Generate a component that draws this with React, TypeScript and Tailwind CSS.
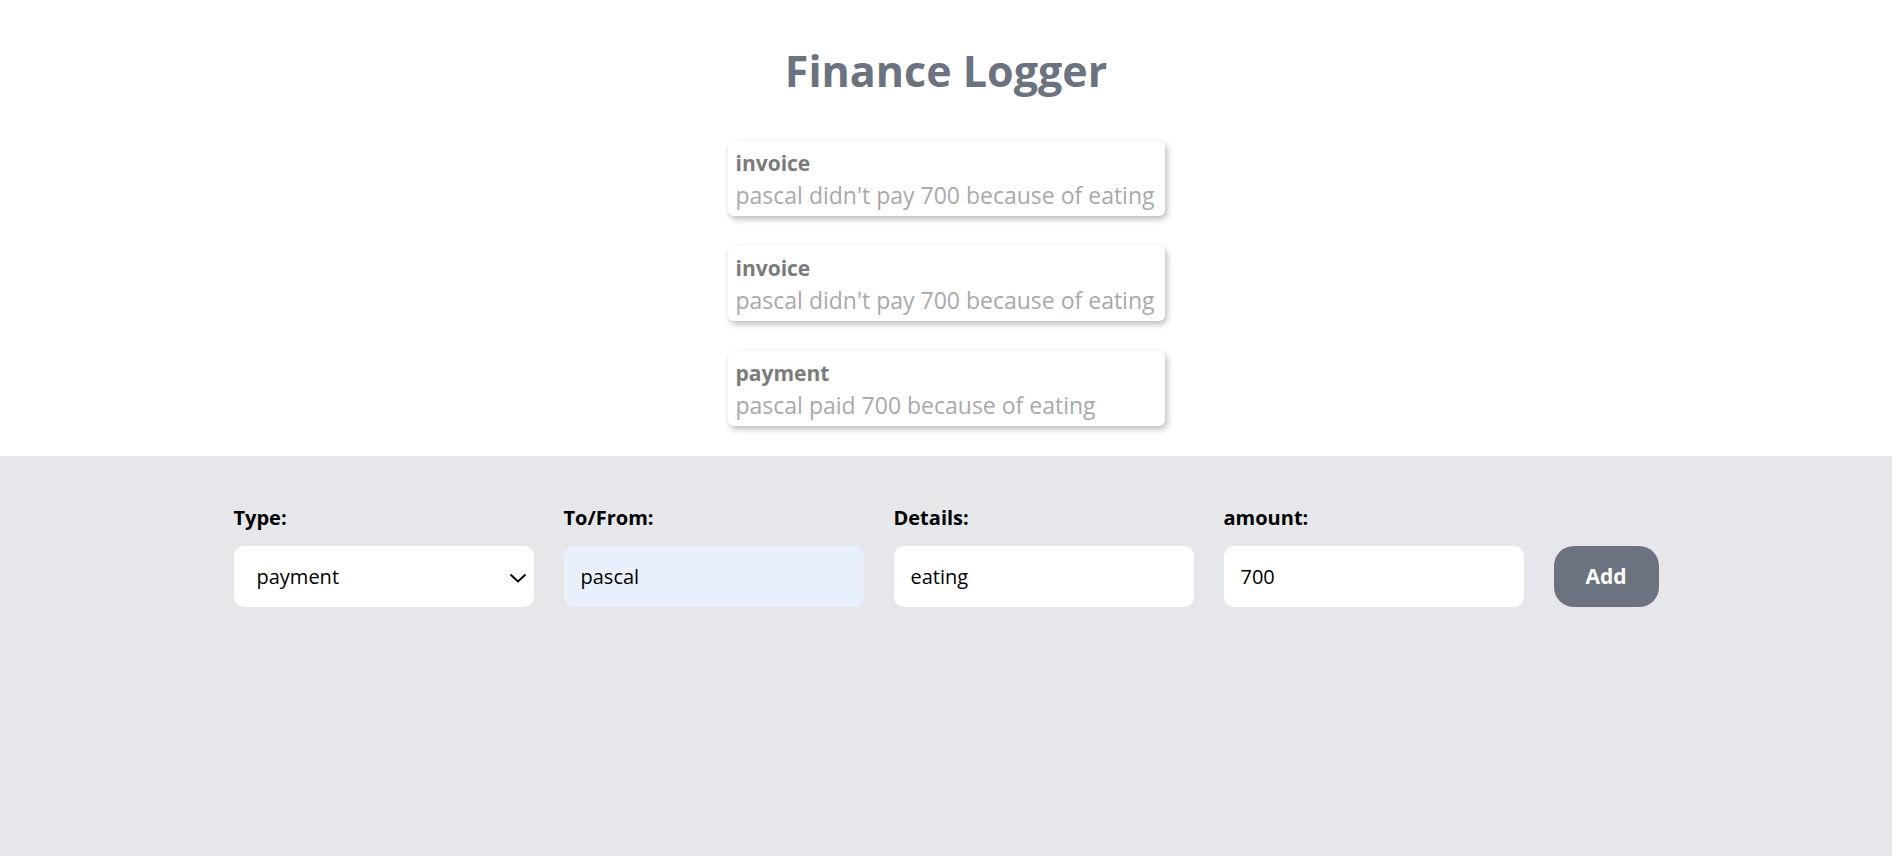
import React, { useState } from 'react'

interface Entry {
  kind: 'invoice' | 'payment'
  text: string
}

const entries: Entry[] = [
  { kind: 'invoice', text: "pascal didn't pay 700 because of eating" },
  { kind: 'invoice', text: "pascal didn't pay 700 because of eating" },
  { kind: 'payment', text: 'pascal paid 700 because of eating' },
]

const inputClass =
  'h-[61px] w-[300px] rounded-[10px] px-[17px] text-[20px] text-black focus:outline-none'

export default function App() {
  const [type, setType] = useState('payment')
  const [toFrom, setToFrom] = useState('pascal')
  const [details, setDetails] = useState('eating')
  const [amount, setAmount] = useState('700')

  return (
    <div
      className="flex min-h-screen flex-col pr-[11px]"
      style={{ fontFamily: '"Open Sans", "Noto Sans", sans-serif' }}
    >
      {/* Header + logged items */}
      <header className="flex flex-col items-center bg-white pt-[47px] pb-[30px]">
        <h1 className="text-[43px] leading-[48px] font-bold text-[#6b7280]">Finance Logger</h1>
        <ul className="mt-[46px] flex w-[437px] flex-col gap-[30px]">
          {entries.map((e, i) => (
            <li
              key={i}
              className="h-[75px] rounded-[6px] bg-white px-2 pt-[6px] shadow-[2px_3px_6px_rgba(0,0,0,0.28)]"
            >
              <div className="text-[21px] leading-[32px] font-bold text-[#7b7b7b]">{e.kind}</div>
              <div className="text-[23px] leading-[32px] whitespace-nowrap text-[#a9a9a9]">{e.text}</div>
            </li>
          ))}
        </ul>
      </header>

      {/* Entry form */}
      <section className="flex flex-1 items-start justify-center bg-[#e5e7eb] pt-[48px]">
        <form className="flex items-end gap-[30px]" onSubmit={(ev) => ev.preventDefault()}>
          <div className="flex flex-col gap-[14px]">
            <label className="text-[20px] leading-[28px] font-bold text-black">Type:</label>
            <div className="relative">
              <select
                value={type}
                onChange={(ev) => setType(ev.target.value)}
                className={`${inputClass} appearance-none bg-white pl-[23px]`}
              >
                <option value="invoice">invoice</option>
                <option value="payment">payment</option>
              </select>
              <svg
                className="pointer-events-none absolute top-[27px] left-[275px]"
                width="18"
                height="10"
                viewBox="0 0 18 10"
                fill="none"
                stroke="black"
                strokeWidth="2"
              >
                <path d="M1.5 1.5 L9 8.5 L16.5 1.5" />
              </svg>
            </div>
          </div>
          <div className="flex flex-col gap-[14px]">
            <label className="text-[20px] leading-[28px] font-bold text-black">To/From:</label>
            <input
              value={toFrom}
              onChange={(ev) => setToFrom(ev.target.value)}
              className={`${inputClass} bg-[#e8f0fe]`}
            />
          </div>
          <div className="flex flex-col gap-[14px]">
            <label className="text-[20px] leading-[28px] font-bold text-black">Details:</label>
            <input
              value={details}
              onChange={(ev) => setDetails(ev.target.value)}
              className={`${inputClass} bg-white`}
            />
          </div>
          <div className="flex flex-col gap-[14px]">
            <label className="text-[20px] leading-[28px] font-bold text-black">amount:</label>
            <input
              value={amount}
              onChange={(ev) => setAmount(ev.target.value)}
              className={`${inputClass} bg-white`}
            />
          </div>
          <button
            type="submit"
            className="h-[61px] w-[105px] rounded-[20px] bg-[#6b7280] text-[21px] font-bold text-white"
          >
            Add
          </button>
        </form>
      </section>
    </div>
  )
}
